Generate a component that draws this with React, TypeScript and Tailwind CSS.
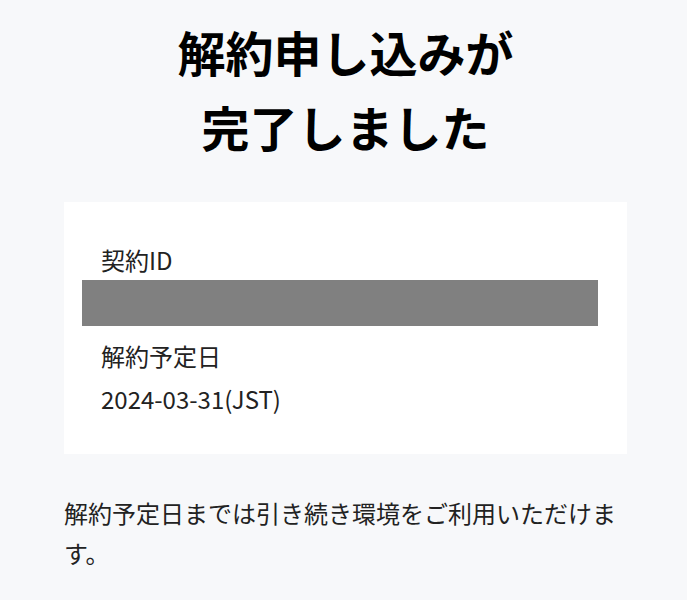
export default function App() {
  return (
    <div
      className="min-h-[600px] bg-[#f7f8fa] pl-[64px] pr-[60px] pt-[14px] text-[#111]"
      style={{ fontFamily: '"Noto Sans CJK JP", "Noto Sans", sans-serif' }}
    >
      <h1 className="text-center text-[48px] font-bold leading-[75px] text-black">
        解約申し込みが
        <br />
        完了しました
      </h1>
      <div className="mt-[38px] bg-white pt-[40px] pb-[37px]">
        <div className="pl-[37px] text-[24px] leading-[36px] text-[#222]">契約ID</div>
        <div className="ml-[18px] mt-[2px] h-[46px] w-[516px] bg-[#808080]" />
        <div className="mt-[12px] pl-[37px] text-[24px] leading-[36px] text-[#222]">解約予定日</div>
        <div className="mt-[7px] pl-[37px] text-[24px] leading-[36px] text-[#222]">2024-03-31(JST)</div>
      </div>
      <p className="mt-[39px] text-[24px] leading-[40px] text-[#222]">
        解約予定日までは引き続き環境をご利用いただけます。
      </p>
    </div>
  );
}
